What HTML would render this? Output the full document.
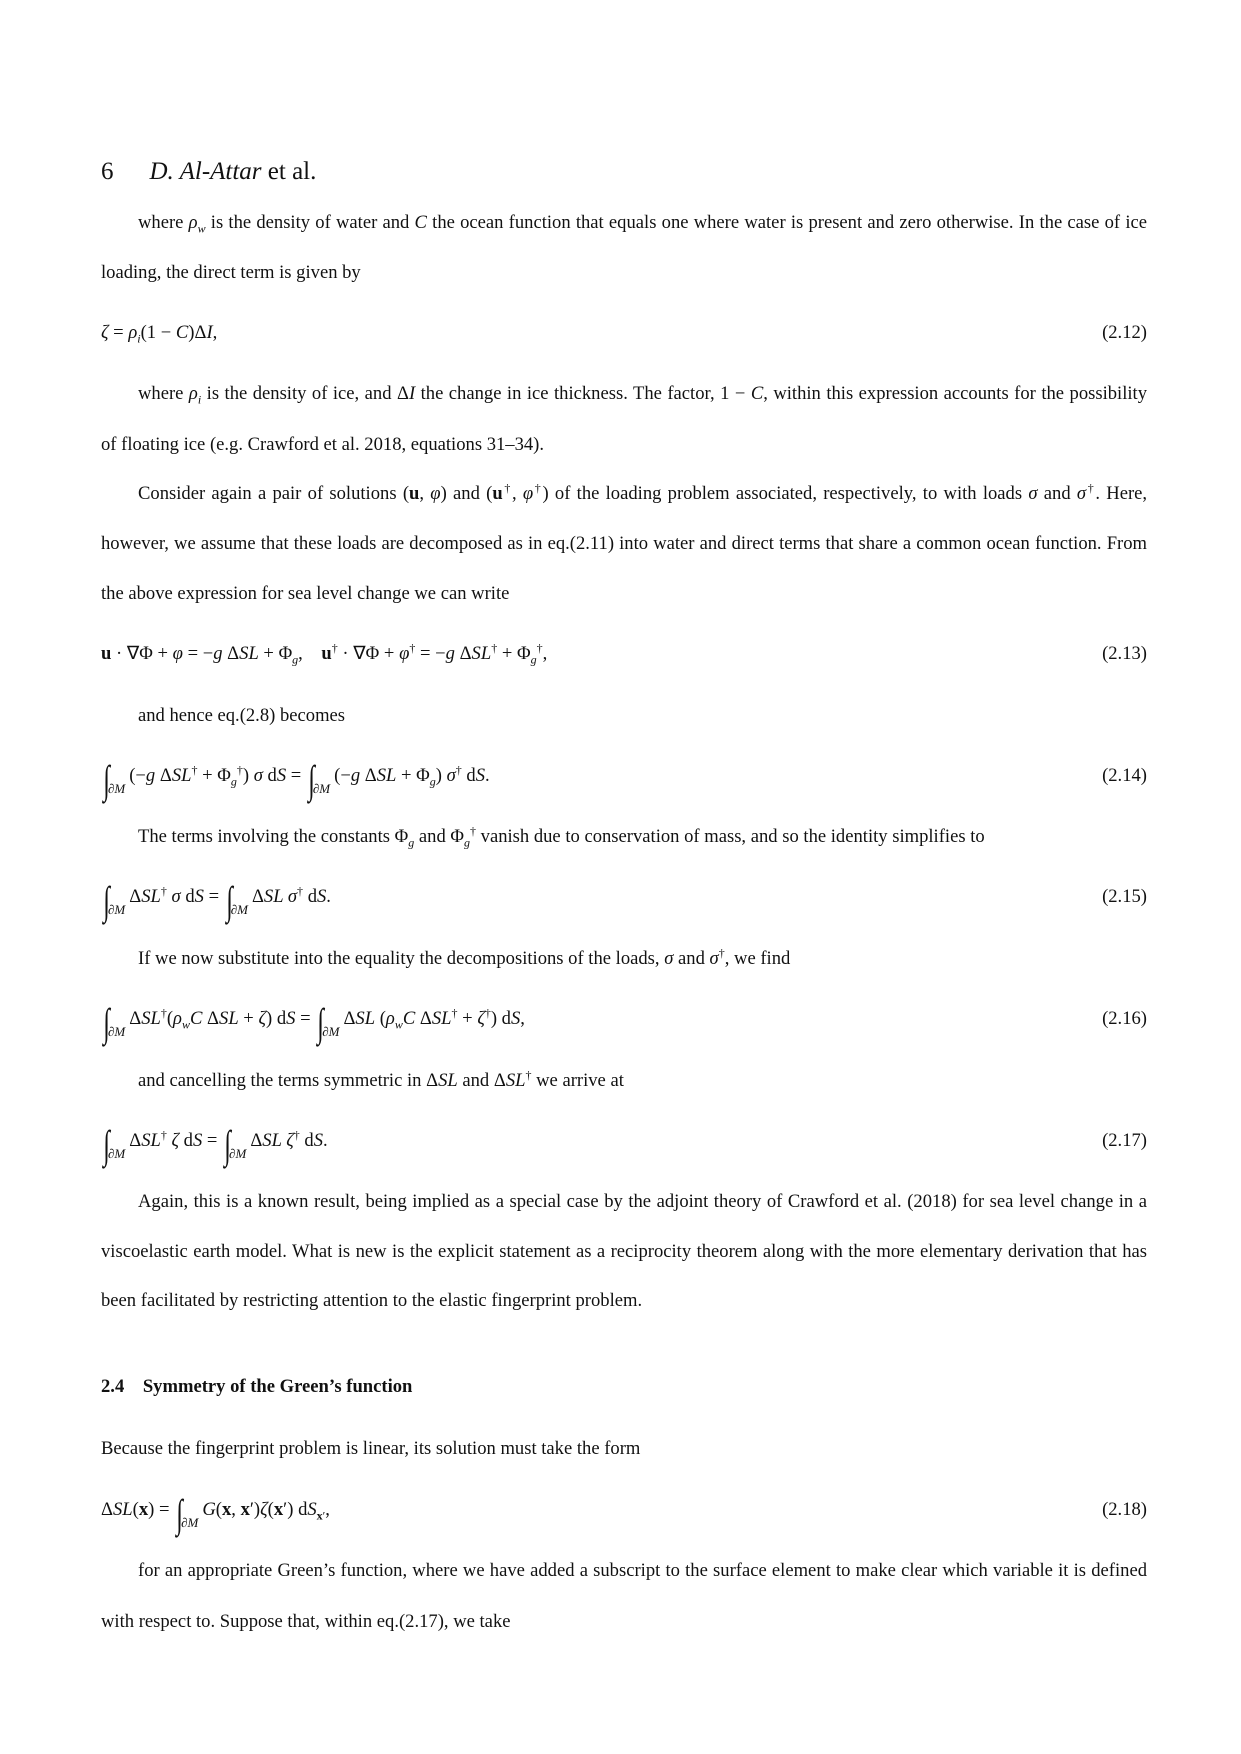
<!DOCTYPE html>
<html><head><meta charset="utf-8"><style>
body{margin:0;background:#fff;}
.pg{position:relative;width:1241px;height:1754px;font-family:"Liberation Serif",serif;font-size:18.6px;color:#111;}
.l{position:absolute;left:101px;width:1046px;height:22px;line-height:22px;white-space:nowrap;}
.j{text-align:justify;text-align-last:justify;white-space:normal;}
.ind{padding-left:37px;box-sizing:border-box;}
.n{position:absolute;right:0;top:0;}
i{font-style:italic;}
.int{font-size:40px;font-style:normal;display:inline-block;transform:scaleX(.6);vertical-align:-12px;line-height:10px;margin-right:-4px;}
sub,sup{font-size:12px;line-height:0;}
.s{position:relative;top:12px;font-size:13px;font-style:italic;margin-right:4px;}
b.v{font-weight:bold;}
</style></head><body><div class="pg">
<div class="l" style="top:157px;font-size:25px;height:30px;line-height:30px;">6<span style="display:inline-block;width:36px"></span><i>D. Al-Attar</i> et al.</div>
<div class="l j ind" style="top:212px">where <i>ρ<sub>w</sub></i> is the density of water and <i>C</i> the ocean function that equals one where water is present and zero otherwise. In the case of ice</div>
<div class="l" style="top:262px">loading, the direct term is given by</div>
<div class="l" style="top:322px"><i>ζ</i> = <i>ρ<sub>i</sub></i>(1 − <i>C</i>)Δ<i>I</i>,<span class="n">(2.12)</span></div>
<div class="l j ind" style="top:383px">where <i>ρ<sub>i</sub></i> is the density of ice, and Δ<i>I</i> the change in ice thickness. The factor, 1 − <i>C</i>, within this expression accounts for the possibility</div>
<div class="l" style="top:434px">of floating ice (e.g. Crawford et al. 2018, equations 31–34).</div>
<div class="l j ind" style="top:483px">Consider again a pair of solutions (<b class="v">u</b>, <i>φ</i>) and (<b class="v">u</b><sup>†</sup>, <i>φ</i><sup>†</sup>) of the loading problem associated, respectively, to with loads <i>σ</i> and <i>σ</i><sup>†</sup>. Here,</div>
<div class="l j" style="top:533px">however, we assume that these loads are decomposed as in eq.(2.11) into water and direct terms that share a common ocean function. From</div>
<div class="l" style="top:583px">the above expression for sea level change we can write</div>
<div class="l" style="top:643px"><b class="v">u</b> · ∇Φ + <i>φ</i> = −<i>g</i> Δ<i>SL</i> + Φ<sub><i>g</i></sub>,&nbsp;&nbsp;&nbsp; <b class="v">u</b><sup>†</sup> · ∇Φ + <i>φ</i><sup>†</sup> = −<i>g</i> Δ<i>SL</i><sup>†</sup> + Φ<sub><i>g</i></sub><sup>†</sup>,<span class="n">(2.13)</span></div>
<div class="l ind" style="top:705px">and hence eq.(2.8) becomes</div>
<div class="l" style="top:765px"><span class="int">∫</span><span class="s">∂M</span>(−<i>g</i> Δ<i>SL</i><sup>†</sup> + Φ<sub><i>g</i></sub><sup>†</sup>) <i>σ</i> d<i>S</i> = <span class="int">∫</span><span class="s">∂M</span>(−<i>g</i> Δ<i>SL</i> + Φ<sub><i>g</i></sub>) <i>σ</i><sup>†</sup> d<i>S</i>.<span class="n">(2.14)</span></div>
<div class="l ind" style="top:826px">The terms involving the constants Φ<sub><i>g</i></sub> and Φ<sub><i>g</i></sub><sup>†</sup> vanish due to conservation of mass, and so the identity simplifies to</div>
<div class="l" style="top:886px"><span class="int">∫</span><span class="s">∂M</span>Δ<i>SL</i><sup>†</sup> <i>σ</i> d<i>S</i> = <span class="int">∫</span><span class="s">∂M</span>Δ<i>SL σ</i><sup>†</sup> d<i>S</i>.<span class="n">(2.15)</span></div>
<div class="l ind" style="top:948px">If we now substitute into the equality the decompositions of the loads, <i>σ</i> and <i>σ</i><sup>†</sup>, we find</div>
<div class="l" style="top:1008px"><span class="int">∫</span><span class="s">∂M</span>Δ<i>SL</i><sup>†</sup>(<i>ρ<sub>w</sub>C</i> Δ<i>SL</i> + <i>ζ</i>) d<i>S</i> = <span class="int">∫</span><span class="s">∂M</span>Δ<i>SL</i> (<i>ρ<sub>w</sub>C</i> Δ<i>SL</i><sup>†</sup> + <i>ζ</i><sup>†</sup>) d<i>S</i>,<span class="n">(2.16)</span></div>
<div class="l ind" style="top:1070px">and cancelling the terms symmetric in Δ<i>SL</i> and Δ<i>SL</i><sup>†</sup> we arrive at</div>
<div class="l" style="top:1130px"><span class="int">∫</span><span class="s">∂M</span>Δ<i>SL</i><sup>†</sup> <i>ζ</i> d<i>S</i> = <span class="int">∫</span><span class="s">∂M</span>Δ<i>SL ζ</i><sup>†</sup> d<i>S</i>.<span class="n">(2.17)</span></div>
<div class="l j ind" style="top:1191px">Again, this is a known result, being implied as a special case by the adjoint theory of Crawford et al. (2018) for sea level change in a</div>
<div class="l j" style="top:1241px">viscoelastic earth model. What is new is the explicit statement as a reciprocity theorem along with the more elementary derivation that has</div>
<div class="l" style="top:1290px">been facilitated by restricting attention to the elastic fingerprint problem.</div>
<div class="l" style="top:1376px;font-weight:bold">2.4&nbsp;&nbsp;&nbsp; Symmetry of the Green’s function</div>
<div class="l" style="top:1438px">Because the fingerprint problem is linear, its solution must take the form</div>
<div class="l" style="top:1499px">Δ<i>SL</i>(<b class="v">x</b>) = <span class="int">∫</span><span class="s">∂M</span><i>G</i>(<b class="v">x</b>, <b class="v">x</b>′)<i>ζ</i>(<b class="v">x</b>′) d<i>S</i><sub><b>x</b>′</sub>,<span class="n">(2.18)</span></div>
<div class="l j ind" style="top:1560px">for an appropriate Green’s function, where we have added a subscript to the surface element to make clear which variable it is defined</div>
<div class="l" style="top:1611px">with respect to. Suppose that, within eq.(2.17), we take</div>
</div></body></html>
